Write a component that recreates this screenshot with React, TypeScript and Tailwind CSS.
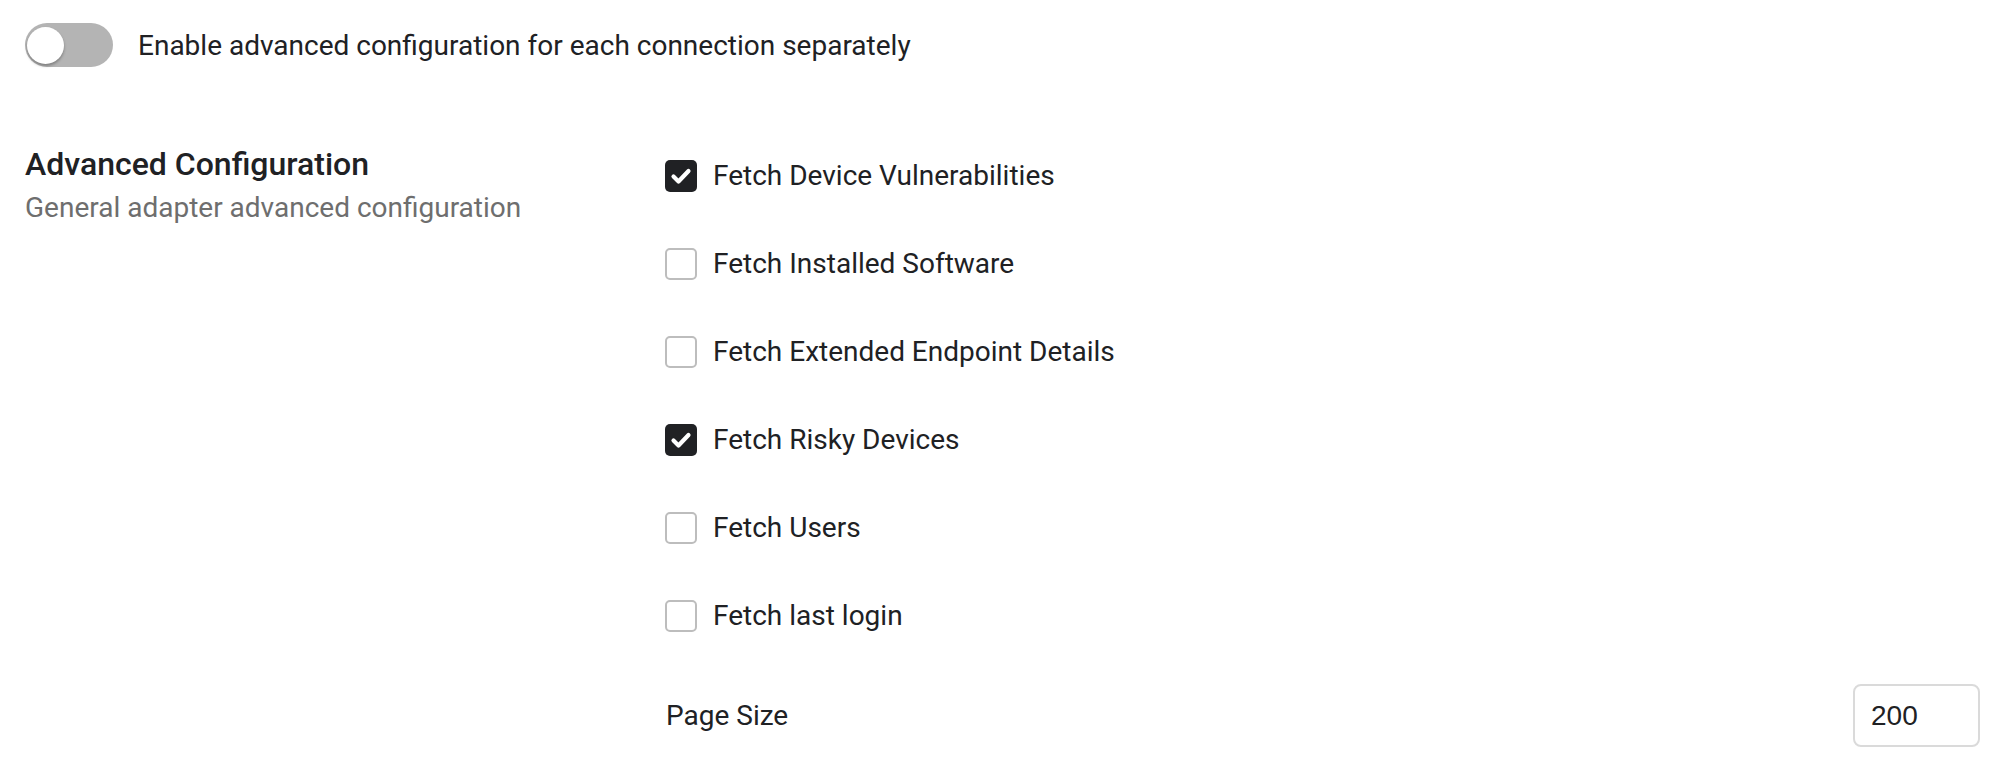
import React from "react";

const items: { label: string; checked: boolean }[] = [
  { label: "Fetch Device Vulnerabilities", checked: true },
  { label: "Fetch Installed Software", checked: false },
  { label: "Fetch Extended Endpoint Details", checked: false },
  { label: "Fetch Risky Devices", checked: true },
  { label: "Fetch Users", checked: false },
  { label: "Fetch last login", checked: false },
];

function Box({ checked }: { checked: boolean }) {
  if (checked) {
    return (
      <div className="w-[32px] h-[32px] rounded-[5px] bg-[#202124] flex items-center justify-center shrink-0">
        <svg width="32" height="32" viewBox="0 0 32 32">
          <path d="M8.5 16.5 L13.5 21.5 L23.5 11" fill="none" stroke="#ffffff" strokeWidth="4.2" strokeLinecap="round" strokeLinejoin="round" />
        </svg>
      </div>
    );
  }
  return <div className="w-[32px] h-[32px] rounded-[5px] border-2 border-[#bdbdbd] bg-white shrink-0" />;
}

export default function App() {
  return (
    <div className="w-full h-[764px] bg-white text-[#202124] pl-[25px] pr-[21px] pt-[23px] overflow-hidden" style={{ fontFamily: "Roboto, 'Noto Sans', sans-serif" }}>
      <div className="flex items-center h-[44px] gap-[25px]">
        <div className="relative w-[88px] h-[44px] rounded-full bg-[#b4b4b4] shrink-0">
          <div className="absolute left-[2px] top-[4px] w-[37px] h-[37px] rounded-full bg-white shadow-[0_2px_3px_rgba(0,0,0,0.3)]" />
        </div>
        <span className="text-[28px] leading-[36px] mt-[2px]">Enable advanced configuration for each connection separately</span>
      </div>

      <div className="mt-[65px] grid grid-cols-[640px_1fr]">
        <div className="pt-[12px]">
          <div className="text-[32px] leading-[40px] font-medium">Advanced Configuration</div>
          <div className="mt-[6px] text-[28px] leading-[36px] text-[#6e6e6e]">General adapter advanced configuration</div>
        </div>
        <div className="flex flex-col">
          {items.map((it) => (
            <div key={it.label} className="h-[88px] flex items-center gap-[16px]">
              <Box checked={it.checked} />
              <span className="text-[28px] leading-[36px]">{it.label}</span>
            </div>
          ))}
          <div className="mt-[24px] flex items-center justify-between">
            <span className="text-[28px] leading-[36px] pl-[1px]">Page Size</span>
            <div className="w-[127px] h-[63px] rounded-[8px] border-2 border-[#dadada] flex items-center pl-[16px] text-[28px] text-[#202124]" style={{ fontFamily: "'Liberation Sans', Arial, sans-serif" }}>
              200
            </div>
          </div>
        </div>
      </div>
    </div>
  );
}
